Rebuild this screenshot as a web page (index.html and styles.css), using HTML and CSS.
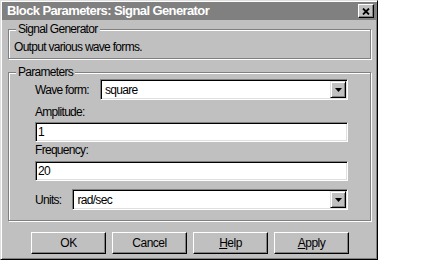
FILE: index.html
```html
<!DOCTYPE html>
<html lang="en">
<head>
  <meta charset="UTF-8" />
  <title>Block Parameters: Signal Generator</title>
  <link rel="stylesheet" href="styles.css">
</head>
<body>
  <div class="dialog">
    <div class="titlebar">
      <span class="title">Block Parameters: Signal Generator</span>
      <button class="close-btn" aria-label="Close">
        <svg width="8" height="7" viewBox="0 0 8 7"><path d="M1 0.5L7 6.5M7 0.5L1 6.5" stroke="#000" stroke-width="1.8"/></svg>
      </button>
    </div>

    <div class="content">
      <div class="group">
        <div class="group-label">Signal Generator</div>
        <p class="desc">Output various wave forms.</p>
      </div>

      <div class="group params">
        <div class="group-label">Parameters</div>
        <div class="fields">
          <div class="row">
            <span class="row-label">Wave form:</span>
            <div class="combo">
              <span class="combo-value">square</span>
              <span class="combo-arrow"><svg width="7" height="4" viewBox="0 0 7 4"><polygon points="0,0 7,0 3.5,4" fill="#000"/></svg></span>
            </div>
          </div>

          <div class="field first">
            <div class="field-label">Amplitude:</div>
            <div class="edit">1</div>
          </div>

          <div class="field">
            <div class="field-label">Frequency:</div>
            <div class="edit">20</div>
          </div>

          <div class="row units">
            <span class="row-label">Units:</span>
            <div class="combo">
              <span class="combo-value">rad/sec</span>
              <span class="combo-arrow"><svg width="7" height="4" viewBox="0 0 7 4"><polygon points="0,0 7,0 3.5,4" fill="#000"/></svg></span>
            </div>
          </div>
        </div>
      </div>

      <div class="buttons">
        <button class="btn">OK</button>
        <button class="btn">Cancel</button>
        <button class="btn"><u>H</u>elp</button>
        <button class="btn"><u>A</u>pply</button>
      </div>
    </div>
  </div>
</body>
</html>
```

FILE: styles.css
```css
body {
  margin: 0;
  background: #fff;
  font-family: "Liberation Sans", Arial, sans-serif;
  font-size: 12px;
  letter-spacing: -0.7px;
  color: #000;
}
.dialog {
  width: 378px;
  height: 260px;
  box-sizing: border-box;
  background: #c0c0c0;
  border: 1px solid;
  border-color: #dfdfdf #000 #000 #dfdfdf;
  box-shadow: inset 1px 1px #fff, inset -1px -1px #808080;
  padding: 1px;
}
.titlebar {
  height: 18px;
  background: #808080;
  color: #fff;
  display: flex;
  align-items: center;
  justify-content: space-between;
  padding: 0 2px 0 5px;
}
.title {
  font-weight: bold;
  font-size: 13px;
  letter-spacing: -0.6px;
  line-height: 18px;
}
.close-btn {
  width: 16px;
  height: 14px;
  padding: 0;
  background: #c0c0c0;
  border: 1px solid;
  border-color: #fff #000 #000 #fff;
  box-shadow: inset -1px -1px #808080;
  display: flex;
  align-items: center;
  justify-content: center;
}
.content {
  padding: 9px 5px 0 6px;
}
.group {
  border: 1px solid #808080;
  box-shadow: inset 1px 1px #fff, 1px 1px #fff;
}
.group-label {
  width: fit-content;
  margin: -8px 0 0 7px;
  padding: 0 2px;
  background: #c0c0c0;
  line-height: 14px;
}
.desc {
  margin: 4px 0 4px 5px;
  line-height: 14px;
}
.params {
  margin-top: 13px;
}
.fields {
  padding: 0 22px 10px 26px;
}
.row {
  display: flex;
  align-items: center;
  gap: 11px;
}
.row-label {
  line-height: 15px;
  padding-top: 2px;
}
.units {
  margin-top: 8px;
}
.combo {
  flex: 1;
  height: 21px;
  box-sizing: border-box;
  display: flex;
  background: #fff;
  border: 1px solid;
  border-color: #808080 #fff #fff #808080;
  box-shadow: inset 1px 1px #000, inset -1px -1px #dfdfdf;
  padding: 1px;
}
.combo-value {
  flex: 1;
  padding: 1px 3px 0;
  line-height: 17px;
}
.combo-arrow {
  width: 16px;
  box-sizing: border-box;
  background: #c0c0c0;
  border: 1px solid;
  border-color: #dfdfdf #000 #000 #dfdfdf;
  box-shadow: inset 1px 1px #fff, inset -1px -1px #808080;
  display: flex;
  align-items: center;
  justify-content: center;
}
.field-label {
  line-height: 15px;
  margin-top: 1px;
}
.field.first .field-label {
  margin-top: 5px;
}
.edit {
  height: 20px;
  box-sizing: border-box;
  margin-top: 3px;
  background: #fff;
  border: 1px solid;
  border-color: #808080 #fff #fff #808080;
  box-shadow: inset 1px 1px #000, inset -1px -1px #dfdfdf;
  padding: 0 2px;
  line-height: 18px;
}
.field.first .edit {
  margin-top: 2px;
}
.buttons {
  display: flex;
  gap: 6px;
  margin-top: 11px;
  padding-left: 23px;
}
.btn {
  width: 75px;
  height: 22px;
  padding: 0;
  background: #c0c0c0;
  border: 1px solid;
  border-color: #fff #000 #000 #fff;
  box-shadow: inset -1px -1px #808080;
  font-family: inherit;
  font-size: 12px;
  letter-spacing: -0.5px;
  color: #000;
}
```
